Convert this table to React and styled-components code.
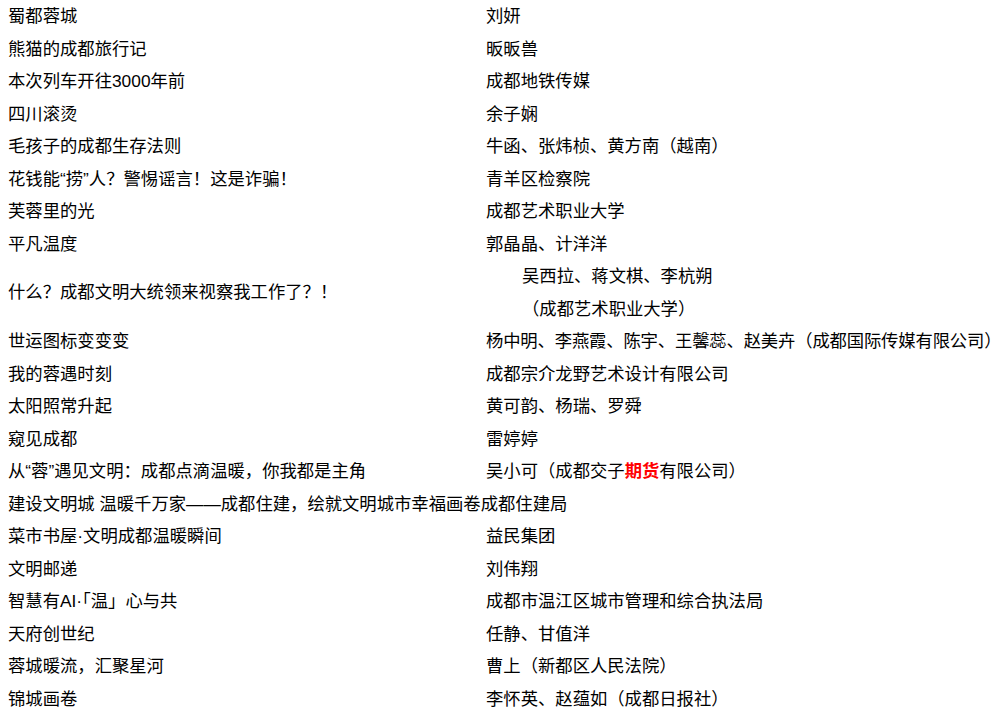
import React from "react";
import styled, { createGlobalStyle } from "styled-components";

const Global = createGlobalStyle`
  html, body { margin: 0; padding: 0; background: #fff; }
  body {
    font-family: "Liberation Sans", "Noto Sans CJK SC", sans-serif;
    font-size: 17.33px;
    color: #000;
  }
`;

const List = styled.div`
  display: flex;
  flex-direction: column;
  width: 1003px;
`;

const Row = styled.div`
  display: grid;
  grid-template-columns: 478px 1fr;
  height: ${(p) => (p.$lines || 1) * 32.5}px;
`;

const Cell = styled.div`
  display: flex;
  flex-direction: column;
  justify-content: center;
  padding-left: ${(p) => (p.$indent ? 44 : 8)}px;
  line-height: 32.5px;
  white-space: nowrap;
  letter-spacing: ${(p) => (p.$tight ? "-0.15px" : "normal")};
  grid-column: ${(p) => (p.$span ? "1 / span 2" : "auto")};
`;

const Line = styled.span`
  display: block;
`;

const Highlight = styled.span`
  color: #ff0000;
  font-weight: bold;
`;

const rows = [
  ["蜀都蓉城", "刘妍"],
  ["熊猫的成都旅行记", "昄昄兽"],
  ["本次列车开往3000年前", "成都地铁传媒"],
  ["四川滚烫", "余子娴"],
  ["毛孩子的成都生存法则", "牛函、张炜桢、黄方南（越南）"],
  ["花钱能“捞”人？警惕谣言！这是诈骗！", "青羊区检察院"],
  ["芙蓉里的光", "成都艺术职业大学"],
  ["平凡温度", "郭晶晶、计洋洋"],
  ["什么？成都文明大统领来视察我工作了？！", ["吴西拉、蒋文棋、李杭朔", "（成都艺术职业大学）"]],
  ["世运图标变变变", "杨中明、李燕霞、陈宇、王馨蕊、赵美卉（成都国际传媒有限公司）", "tight"],
  ["我的蓉遇时刻", "成都宗介龙野艺术设计有限公司"],
  ["太阳照常升起", "黄可韵、杨瑞、罗舜"],
  ["窥见成都", "雷婷婷"],
  [
    "从“蓉”遇见文明：成都点滴温暖，你我都是主角",
    [
      <>
        吴小可（成都交子<Highlight>期货</Highlight>有限公司）
      </>,
    ],
    "plain",
  ],
  ["建设文明城 温暖千万家——成都住建，绘就文明城市幸福画卷成都住建局", null],
  ["菜市书屋·文明成都温暖瞬间", "益民集团"],
  ["文明邮递", "刘伟翔"],
  ["智慧有AI·「温」心与共", "成都市温江区城市管理和综合执法局"],
  ["天府创世纪", "任静、甘值洋"],
  ["蓉城暖流，汇聚星河", "曹上（新都区人民法院）"],
  ["锦城画卷", "李怀英、赵蕴如（成都日报社）"],
];

export default function App() {
  return (
    <>
      <Global />
      <List>
        {rows.map(([title, author, mode], i) => {
          const lines = author === null ? [] : Array.isArray(author) ? author : [author];
          const indent = lines.length > 1;
          return (
            <Row key={i} $lines={Math.max(1, lines.length)}>
              <Cell $span={author === null}>
                <Line>{title}</Line>
              </Cell>
              {author !== null && (
                <Cell $indent={indent} $tight={mode === "tight"}>
                  {lines.map((line, j) => (
                    <Line key={j}>{line}</Line>
                  ))}
                </Cell>
              )}
            </Row>
          );
        })}
      </List>
    </>
  );
}
